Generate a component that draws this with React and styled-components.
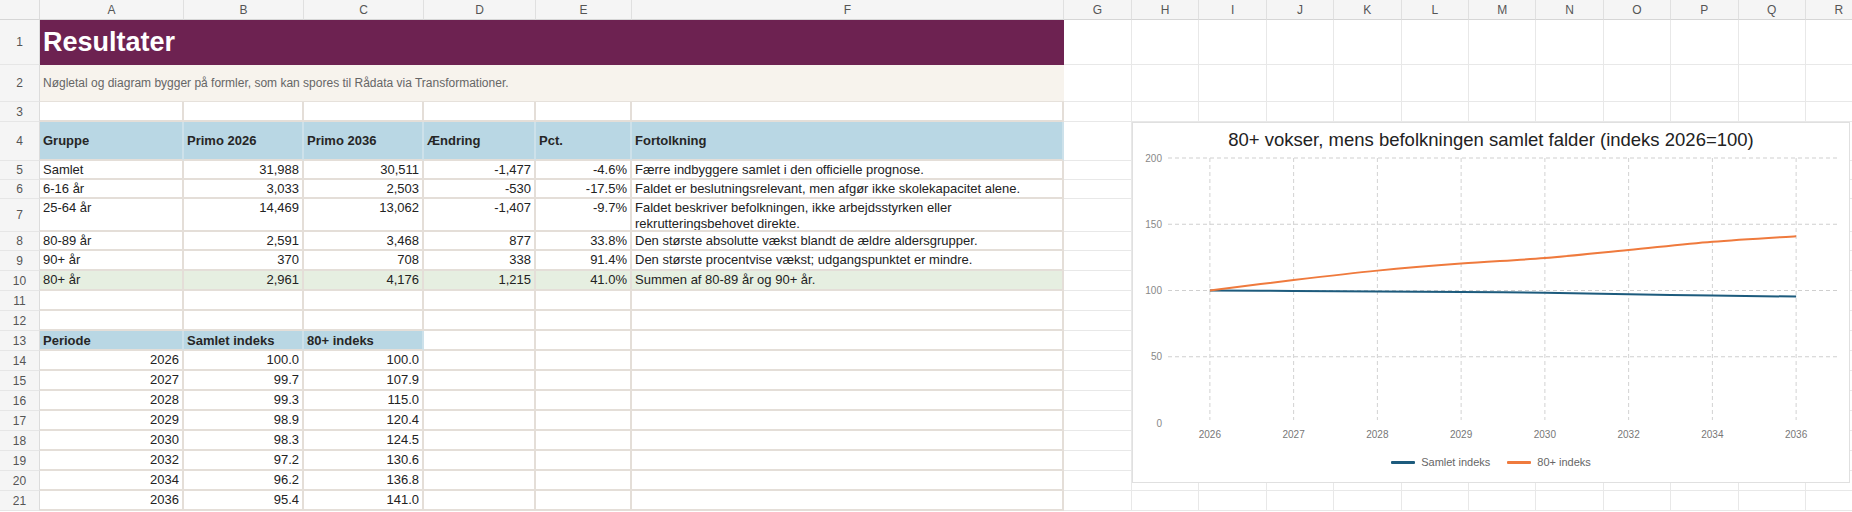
import React from "react"
import styled, { createGlobalStyle } from "styled-components"

const GlobalStyle = createGlobalStyle`
  html, body {
    margin: 0;
    padding: 0;
    background: #fff;
    overflow: hidden;
  }
  body {
    font-family: "Liberation Sans", Arial, sans-serif;
  }
`

const LETTERS = "ABCDEFGHIJKLMNOPQR".split("")
const COL_WIDTHS = [40, 144, 120, 120, 112, 96, 432, 68, ...Array(10).fill(67.4), 67]
const ROW_HEIGHTS = [20, 45, 37, 20, 39, 19, 19, 33, 19, ...Array(13).fill(20)]
const FREE_COLS = 12

const groups = [
  ["Samlet", "31,988", "30,511", "-1,477", "-4.6%", "Færre indbyggere samlet i den officielle prognose."],
  ["6-16 år", "3,033", "2,503", "-530", "-17.5%", "Faldet er beslutningsrelevant, men afgør ikke skolekapacitet alene."],
  ["25-64 år", "14,469", "13,062", "-1,407", "-9.7%", "Faldet beskriver befolkningen, ikke arbejdsstyrken eller rekrutteringsbehovet direkte."],
  ["80-89 år", "2,591", "3,468", "877", "33.8%", "Den største absolutte vækst blandt de ældre aldersgrupper."],
  ["90+ år", "370", "708", "338", "91.4%", "Den største procentvise vækst; udgangspunktet er mindre."],
  ["80+ år", "2,961", "4,176", "1,215", "41.0%", "Summen af 80-89 år og 90+ år."],
]

const index = [
  ["2026", 100.0, 100.0],
  ["2027", 99.7, 107.9],
  ["2028", 99.3, 115.0],
  ["2029", 98.9, 120.4],
  ["2030", 98.3, 124.5],
  ["2032", 97.2, 130.6],
  ["2034", 96.2, 136.8],
  ["2036", 95.4, 141.0],
]

const Sheet = styled.div`
  position: relative;
  display: grid;
  grid-template-columns: ${COL_WIDTHS.map(w => `${w}px`).join(" ")};
  grid-template-rows: ${ROW_HEIGHTS.map(h => `${h}px`).join(" ")};
  width: max-content;
`

const Corner = styled.div`
  background: #f5f5f5;
  border-right: 1px solid #dcdcdc;
  border-bottom: 1px solid #d6d6d6;
`

const ColHead = styled.div`
  display: flex;
  align-items: center;
  justify-content: center;
  background: #f5f5f5;
  border-right: 1px solid #e0e0e0;
  border-bottom: 1px solid #d6d6d6;
  color: #555;
  font-size: 12px;
`

const RowHead = styled.div`
  display: flex;
  align-items: center;
  justify-content: center;
  background: #f5f5f5;
  border-right: 1px solid #dcdcdc;
  border-bottom: 1px solid #e6e6e6;
  color: #555;
  font-size: 12px;
`

const Cell = styled.div`
  box-sizing: border-box;
  padding: 1px 3px 0;
  border-right: 2px solid #e4ded8;
  border-bottom: 2px solid #e4ded8;
  background: ${p => p.$bg || "#fff"};
  color: #222;
  font-size: 13px;
  line-height: ${p => (p.$wrap ? "16px" : "15px")};
  text-align: ${p => (p.$num ? "right" : "left")};
  white-space: ${p => (p.$wrap ? "normal" : "nowrap")};
  overflow: hidden;
`

const HeadCell = styled.div`
  display: flex;
  align-items: center;
  box-sizing: border-box;
  padding: 0 3px;
  border-right: 2px solid #cde1ea;
  border-bottom: 2px solid #e4ded8;
  background: #b9d7e4;
  color: #262626;
  font-size: 13px;
  font-weight: 700;
  white-space: nowrap;
`

const FreeCell = styled.div`
  border-right: 1px solid #e8e8e8;
  border-bottom: 1px solid #e8e8e8;
`

const TitleCell = styled.div`
  grid-column: span 6;
  display: flex;
  align-items: center;
  padding: 0 3px;
  background: #6d2251;
  color: #fff;
  font-size: 27px;
  font-weight: 700;
`

const NoteCell = styled.div`
  grid-column: span 6;
  display: flex;
  align-items: center;
  padding: 0 3px;
  background: #f7f3ed;
  border-bottom: 1px solid #e6e1db;
  color: #666;
  font-size: 12px;
`

const ChartBox = styled.div`
  position: absolute;
  left: 1132px;
  top: 122px;
  width: 718px;
  height: 361px;
  box-sizing: border-box;
  display: flex;
  flex-direction: column;
  align-items: center;
  background: #fff;
  border: 1px solid #e0e0e0;
`

const ChartTitle = styled.div`
  margin-top: 6px;
  height: 22px;
  line-height: 22px;
  font-size: 18.5px;
  color: #222;
  white-space: nowrap;
`

const Plot = styled.svg`
  display: block;
  overflow: visible;
`

const AxisText = styled.text`
  font-family: "Liberation Sans", Arial, sans-serif;
  font-size: 10px;
  fill: ${p => p.$fill || "#888"};
`

const Legend = styled.div`
  display: flex;
  gap: 17px;
  margin-top: 4px;
  height: 14px;
  align-items: center;
`

const LegendItem = styled.div`
  display: flex;
  align-items: center;
  gap: 6px;
  color: #666;
  font-size: 11px;
`

const Swatch = styled.span`
  width: 24px;
  height: 3px;
  border-radius: 1px;
  background: ${p => p.$color};
`

const BLUE = "#1d5b7d"
const ORANGE = "#ef7a3d"

const PLOT = { left: 35, right: 705, top: 7, bottom: 272 }
const band = (PLOT.right - PLOT.left) / index.length
const xAt = i => PLOT.left + band / 2 + i * band
const yAt = v => PLOT.bottom - (v / 200) * (PLOT.bottom - PLOT.top)

const smoothPath = (pts, s = 0.16) => {
  let d = `M${pts[0][0]},${pts[0][1]}`
  for (let i = 0; i < pts.length - 1; i++) {
    const p0 = pts[i - 1] || pts[i]
    const p1 = pts[i]
    const p2 = pts[i + 1]
    const p3 = pts[i + 2] || p2
    const c1 = [p1[0] + (p2[0] - p0[0]) * s, p1[1] + (p2[1] - p0[1]) * s]
    const c2 = [p2[0] - (p3[0] - p1[0]) * s, p2[1] - (p3[1] - p1[1]) * s]
    d += ` C${c1[0]},${c1[1]} ${c2[0]},${c2[1]} ${p2[0]},${p2[1]}`
  }
  return d
}

const Chart = () => {
  const total = index.map((r, i) => [xAt(i), yAt(r[1])])
  const old = index.map((r, i) => [xAt(i), yAt(r[2])])
  return (
    <ChartBox>
      <ChartTitle>80+ vokser, mens befolkningen samlet falder (indeks 2026=100)</ChartTitle>
      <Plot width="716" height="300" viewBox="0 0 716 300">
        {[200, 150, 100, 50].map(v => (
          <line key={v} x1={PLOT.left} x2={PLOT.right} y1={yAt(v)} y2={yAt(v)} stroke="#cfcfcf" strokeDasharray="4 3" />
        ))}
        {index.map((r, i) => (
          <line key={r[0]} x1={xAt(i)} x2={xAt(i)} y1={PLOT.top} y2={PLOT.bottom - 3} stroke="#d2d2d2" strokeDasharray="4 3" />
        ))}
        {[200, 150, 100, 50, 0].map(v => (
          <AxisText key={v} x={29} y={yAt(v) + 3.5} textAnchor="end">{v}</AxisText>
        ))}
        {index.map((r, i) => (
          <AxisText key={r[0]} x={xAt(i)} y={286.5} textAnchor="middle" $fill="#777">{r[0]}</AxisText>
        ))}
        <path d={smoothPath(total)} fill="none" stroke={BLUE} strokeWidth="2" />
        <path d={smoothPath(old)} fill="none" stroke={ORANGE} strokeWidth="2" />
      </Plot>
      <Legend>
        <LegendItem><Swatch $color={BLUE} />Samlet indeks</LegendItem>
        <LegendItem><Swatch $color={ORANGE} />80+ indeks</LegendItem>
      </Legend>
    </ChartBox>
  )
}

const free = row => Array.from({ length: FREE_COLS }, (_, i) => <FreeCell key={`f${row}-${i}`} />)

const blankRow = row => [
  <RowHead key={`r${row}`}>{row}</RowHead>,
  ...Array.from({ length: 6 }, (_, i) => <Cell key={`b${row}-${i}`} />),
  ...free(row),
]

export default function App() {
  const rows = []

  rows.push(<Corner key="corner" />)
  LETTERS.forEach(l => rows.push(<ColHead key={`c${l}`}>{l}</ColHead>))

  rows.push(<RowHead key="r1">1</RowHead>, <TitleCell key="title">Resultater</TitleCell>, ...free(1))
  rows.push(
    <RowHead key="r2">2</RowHead>,
    <NoteCell key="note">Nøgletal og diagram bygger på formler, som kan spores til Rådata via Transformationer.</NoteCell>,
    ...free(2)
  )
  rows.push(...blankRow(3))

  rows.push(<RowHead key="r4">4</RowHead>)
  ;["Gruppe", "Primo 2026", "Primo 2036", "Ændring", "Pct.", "Fortolkning"].forEach(h =>
    rows.push(<HeadCell key={`h4-${h}`}>{h}</HeadCell>)
  )
  rows.push(...free(4))

  groups.forEach((g, gi) => {
    const row = 5 + gi
    const bg = g[0] === "80+ år" ? "#e6efe1" : undefined
    rows.push(<RowHead key={`r${row}`}>{row}</RowHead>)
    g.forEach((v, ci) => (
      rows.push(
        <Cell key={`g${row}-${ci}`} $bg={bg} $num={ci > 0 && ci < 5} $wrap={ci === 5}>
          {v}
        </Cell>
      )
    ))
    rows.push(...free(row))
  })

  rows.push(...blankRow(11), ...blankRow(12))

  rows.push(<RowHead key="r13">13</RowHead>)
  ;["Periode", "Samlet indeks", "80+ indeks"].forEach(h => rows.push(<HeadCell key={`h13-${h}`}>{h}</HeadCell>))
  rows.push(<Cell key="b13-3" />, <Cell key="b13-4" />, <Cell key="b13-5" />, ...free(13))

  index.forEach((r, i) => {
    const row = 14 + i
    rows.push(
      <RowHead key={`r${row}`}>{row}</RowHead>,
      <Cell key={`i${row}-0`} $num>{r[0]}</Cell>,
      <Cell key={`i${row}-1`} $num>{r[1].toFixed(1)}</Cell>,
      <Cell key={`i${row}-2`} $num>{r[2].toFixed(1)}</Cell>,
      <Cell key={`i${row}-3`} />,
      <Cell key={`i${row}-4`} />,
      <Cell key={`i${row}-5`} />,
      ...free(row)
    )
  })

  return (
    <>
      <GlobalStyle />
      <Sheet>
        {rows}
        <Chart />
      </Sheet>
    </>
  )
}
